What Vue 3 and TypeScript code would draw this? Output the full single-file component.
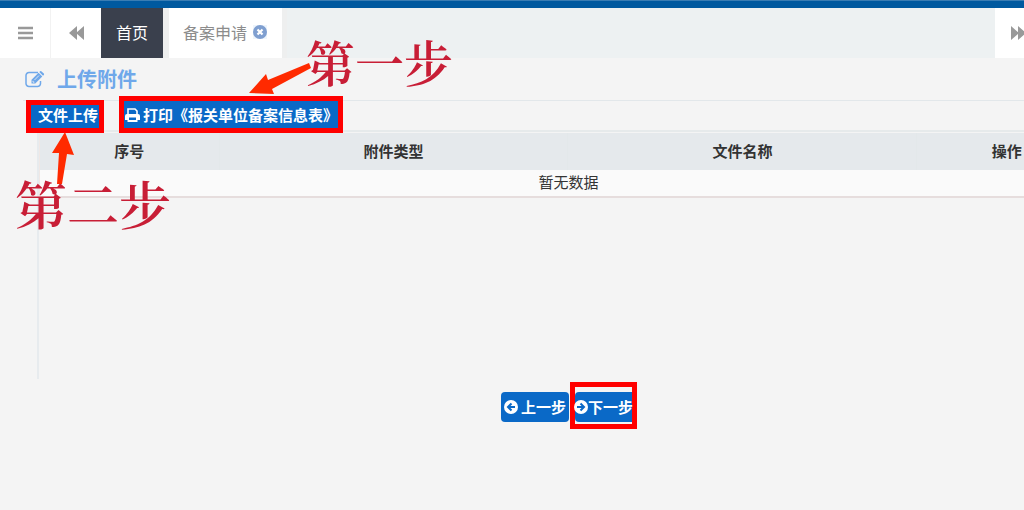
<script setup lang="ts">
import { ref } from 'vue'

interface Column {
  label: string
  kind: 'narrow' | 'wide'
}

const columns: Column[] = [
  { label: '序号', kind: 'narrow' },
  { label: '附件类型', kind: 'wide' },
  { label: '文件名称', kind: 'wide' },
  { label: '操作', kind: 'narrow' },
]

const activeTab = ref('home')
</script>

<template>
  <div class="page">
    <header>
      <div class="topbar"></div>
      <nav class="tabs">
        <button class="tool menu" type="button" aria-label="菜单">
          <svg width="16" height="14" viewBox="0 0 16 14"><path d="M1 2h15M1 7h15M1 12h15" stroke="#999" stroke-width="2.500" /></svg>
        </button>
        <button class="tool" type="button" aria-label="向左">
          <svg width="16" height="14" viewBox="0 0 16 14"><path d="M9 0v14L1 7zM16 0v14L8 7z" fill="#999" /></svg>
        </button>
        <button class="tab home" :class="{ active: activeTab === 'home' }" type="button" @click="activeTab = 'home'">首页</button>
        <div class="tab record">
          <a href="#record">备案申请</a>
          <button class="close" type="button" aria-label="关闭">
            <svg width="14" height="14" viewBox="0 0 14 14">
              <circle cx="7" cy="7" r="7" fill="#7f9fd0" />
              <path d="M4.500 4.500l5 5M9.500 4.500l-5 5" stroke="#fff" stroke-width="2.200" />
            </svg>
          </button>
        </div>
        <div class="rest"></div>
        <button class="tool forward" type="button" aria-label="向右">
          <svg width="13" height="14" viewBox="0 0 13 14"><path d="M0 0v14l8-7zM7 0v14l8-7z" fill="#999" /></svg>
        </button>
      </nav>
    </header>

    <main>
      <h1>
        <svg width="20" height="17" viewBox="0 0 20 17" fill="none">
          <path d="M13 1.500H4A3 3 0 0 0 1 4.500v8a3 3 0 0 0 3 3h8.500a3 3 0 0 0 3-3V10" stroke="#6fa8ea" stroke-width="1.500" />
          <path d="M6.500 12.500V8.700l7-7 3.800 3.800-7 7zM14.300 1l.8-.7q.8-.6 1.500.1l2.200 2.200q.6.700 0 1.400l-.8.800z" fill="#6fa8ea" />
          <path d="M9.500 9l4.500-4.500M8 9.800v1.400h1.400" stroke="#f4f4f4" stroke-width=".8" />
        </svg>
        <span>上传附件</span>
      </h1>

      <section class="panel">
        <div class="toolbar">
          <span class="marked upload"><button class="btn" type="button">文件上传</button></span>
          <span class="marked print">
            <button class="btn" type="button">
              <svg width="15" height="14" viewBox="0 0 15 14">
                <path d="M3 6.500V1h7l2 2v3.500" fill="none" stroke="#fff" stroke-width="1.600" />
                <path d="M0 12V8q0-2 2-2h11q2 0 2 2v4h-2.500v2h-10v-2z" fill="#fff" />
                <path d="M4 9.500h7v2.500H4z" fill="#0a69c7" />
              </svg>
              <span>打印《报关单位备案信息表》</span>
            </button>
          </span>
        </div>

        <div class="content">
          <div class="grid">
            <table>
              <thead>
                <tr>
                  <th v-for="column in columns" :key="column.label" :class="column.kind">{{ column.label }}</th>
                </tr>
              </thead>
              <tbody>
                <tr><td :colspan="columns.length">暂无数据</td></tr>
              </tbody>
            </table>
          </div>
        </div>

        <div class="steps">
          <button class="btn round" type="button">
            <svg width="14" height="14" viewBox="0 0 14 14">
              <circle cx="7" cy="7" r="7" fill="#fff" />
              <path d="M11 7H4.500M7.500 3.500L4 7l3.500 3.500" fill="none" stroke="#0a69c7" stroke-width="2" />
            </svg>
            <span>上一步</span>
          </button>
          <span class="marked next">
            <button class="btn" type="button">
              <svg width="14" height="14" viewBox="0 0 14 14">
                <circle cx="7" cy="7" r="7" fill="#fff" />
                <path d="M3 7h6.500M6.500 3.500L10 7l-3.500 3.500" fill="none" stroke="#0a69c7" stroke-width="2" />
              </svg>
              <span>下一步</span>
            </button>
          </span>
        </div>
      </section>
    </main>

    <div class="note first">第一步</div>
    <div class="note second">第二步</div>
    <svg class="arrows" width="460" height="200" viewBox="0 0 460 200" aria-hidden="true">
      <path d="M249 93L266 74l2 6 41-17 2 5-39 21 2 5zM65 132l9 23-7-1-5 30h-5l2-31h-7z" fill="#ff2a00" />
    </svg>
  </div>
</template>

<style>
body {
  background: #f4f4f4;
}
</style>

<style scoped>
.page {
  position: relative;
  min-height: 100vh;
  overflow: hidden;
  background: #f4f4f4;
  color: #333;
  font: 15px/20px "Noto Sans CJK SC", sans-serif;
}
button {
  margin: 0;
  padding: 0;
  border: 0;
  font: inherit;
  cursor: pointer;
}
svg {
  display: block;
  flex: none;
}
.topbar {
  height: 8px;
  box-sizing: border-box;
  background: #00599f;
  border-top: 1px solid #3a7db3;
}
.tabs {
  display: flex;
  height: 50px;
  background: #edf1f2;
}
.tool {
  display: flex;
  align-items: center;
  justify-content: center;
  width: 50px;
  flex: none;
  background: #fff;
}
.menu {
  box-sizing: content-box;
  border-right: 1px solid #f2f2f2;
}
.forward {
  width: 29px;
  justify-content: flex-end;
}
.tab {
  display: flex;
  align-items: center;
  justify-content: center;
  padding-bottom: 2px;
  box-sizing: border-box;
  font-size: 16px;
}
.home {
  width: 62px;
  color: #999;
  background: #fff;
}
.home.active {
  color: #fff;
  background: #3a404d;
}
.record {
  gap: 6px;
  padding: 0 15px 2px 14px;
  background: #fff;
  border-left: 6px solid #eeefef;
  border-right: 5px solid #eeefef;
}
.record a {
  color: #8c8c8c;
  text-decoration: none;
}
.close {
  background: #eef5fc;
}
.rest {
  flex: 1;
}
h1 {
  display: flex;
  align-items: center;
  gap: 12px;
  height: 42px;
  margin: 0 0 0 23px;
  padding-left: 2px;
  border-bottom: 1px solid #e2e7ea;
  color: #6fa8ea;
  font-size: 20px;
  line-height: 28px;
}
.toolbar {
  display: flex;
  gap: 15px;
  height: 29px;
  margin-left: 26px;
}
.marked {
  position: relative;
  display: flex;
  height: 33px;
  box-sizing: border-box;
  border: 5px solid #f00;
  background: #0a69c7;
}
.upload {
  width: 78px;
  margin-top: -1px;
}
.print {
  width: 224px;
  height: 37px;
  margin-top: -5px;
}
.btn {
  display: flex;
  align-items: center;
  justify-content: center;
  gap: 3px;
  flex: 1;
  background: #0a69c7;
  color: #fff;
  font-size: 15px;
  font-weight: 700;
  white-space: nowrap;
}
.upload .btn {
  justify-content: flex-end;
  padding: 0 1px 3px 0;
}
.print .btn {
  justify-content: flex-start;
  padding-left: 1px;
}
.content {
  height: 249px;
  margin-left: 37px;
  border-left: 2px solid #e7ebee;
}
.grid {
  overflow: hidden;
  border-top: 2px solid #e6eaeb;
}
table {
  width: calc(100% + 73px);
  table-layout: fixed;
  border-collapse: separate;
  border-spacing: 0;
  border-left: 1px solid #efe8e6;
  margin-top: 1px;
}
th {
  height: 37px;
  padding: 0 0 2px;
  box-sizing: border-box;
  background: #e5e9ec;
  font-weight: 700;
  border-right: 1px solid #e3e8ea;
}
.narrow {
  width: 17%;
}
.wide {
  width: 33%;
}
td {
  height: 28px;
  padding: 0 0 2px;
  box-sizing: border-box;
  background: #fafafa;
  border-bottom: 2px solid #e6dddd;
  text-align: center;
}
.steps {
  display: flex;
  align-items: flex-start;
  justify-content: center;
  gap: 1px;
  margin-left: 114px;
  padding-top: 3px;
}
.round {
  flex: none;
  width: 68px;
  height: 30px;
  margin-top: 10px;
  border-radius: 4px;
}
.next {
  width: 67px;
  height: 47px;
  background: #f4f4f4;
}
.next .btn {
  flex: none;
  width: 57px;
  height: 30px;
  margin-top: 5px;
  gap: 0;
  border-radius: 4px 0 0 4px;
}
.note {
  position: absolute;
  color: #c81e36;
  font-family: "Noto Serif CJK SC", "Source Han Serif SC", "SimSun", "Liberation Serif", "Noto Sans CJK SC", serif;
  font-size: 52px;
  font-weight: 600;
  line-height: 64px;
  white-space: nowrap;
}
.first {
  left: 306px;
  top: 29px;
  font-size: 49px;
}
.second {
  left: 15px;
  top: 171px;
}
.arrows {
  position: absolute;
  left: 0;
  top: 0;
  pointer-events: none;
}
</style>
